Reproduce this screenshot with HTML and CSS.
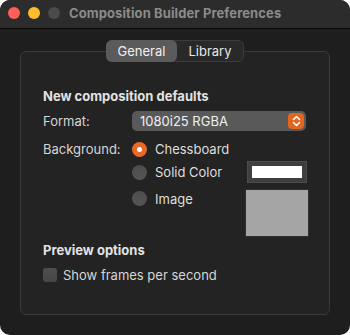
FILE: index.html
```html
<!DOCTYPE html>
<html lang="en">
<head>
  <meta charset="UTF-8" />
  <title>Composition Builder Preferences</title>
  <link rel="stylesheet" href="styles.css">
</head>
<body>

<div class="window">
  <div class="titlebar">
    <span class="light red"></span>
    <span class="light yellow"></span>
    <span class="light gray"></span>
    <span class="title">Composition Builder Preferences</span>
  </div>

  <div class="content">
    <div class="tabs">
      <div class="tab active">General</div>
      <div class="tab">Library</div>
    </div>

    <div class="box">
      <h2>New composition defaults</h2>

      <div class="row format-row">
        <span class="label">Format:</span>
        <div class="popup">
          <span>1080i25 RGBA</span>
          <span class="stepper">
            <svg width="9" height="12" viewBox="0 0 9 12">
              <path d="M1.5 4.5 L4.5 1.5 L7.5 4.5 M1.5 7.5 L4.5 10.5 L7.5 7.5" fill="none" stroke="#fff" stroke-width="1.6" stroke-linecap="round" stroke-linejoin="round"/>
            </svg>
          </span>
        </div>
      </div>

      <div class="bg-group">
        <span class="label">Background:</span>
        <div class="options">
          <div class="option opt-1">
            <span class="radio on"></span>
            <span>Chessboard</span>
          </div>
          <div class="option opt-2">
            <span class="radio"></span>
            <span class="opt-text">Solid Color</span>
            <span class="color-well"><span class="swatch"></span></span>
          </div>
          <div class="option opt-3">
            <span class="radio"></span>
            <span class="opt-text">Image</span>
            <span class="image-well"></span>
          </div>
        </div>
      </div>

      <h2 class="preview">Preview options</h2>
      <div class="check-row">
        <span class="checkbox"></span>
        <span>Show frames per second</span>
      </div>
    </div>
  </div>
</div>

</body>
</html>
```

FILE: styles.css
```css
* {
  box-sizing: border-box;
  margin: 0;
  padding: 0;
}
body {
  font-family: Inter, "Noto Sans", sans-serif;
  background-color: #fff;
  font-size: 13px;
  color: #dedede;
}
.window {
  width: 350px;
  height: 335px;
  border-radius: 10px;
  overflow: hidden;
  background-color: #1e1e1e;
}
.titlebar {
  height: 29px;
  background-color: #2c2c2c;
  border-bottom: 1px solid #080808;
  display: flex;
  align-items: center;
  padding-left: 8px;
  padding-bottom: 2px;
}
.light {
  width: 12px;
  height: 12px;
  border-radius: 50%;
  margin-right: 8px;
}
.red { background-color: #fe5f57; }
.yellow { background-color: #febc2e; }
.gray { background-color: #4b4b4b; }
.title {
  margin-left: 1px;
  font-weight: 700;
  color: #8b8b8b;
  font-size: 13px;
  letter-spacing: 0.1px;
}
.content {
  padding: 11px 20px 0;
}
.tabs {
  position: relative;
  z-index: 1;
  width: 138px;
  height: 22px;
  margin: 0 auto;
  display: flex;
  background-color: #292929;
  border: 1px solid #3c3c3c;
  border-radius: 6px;
}
.tab {
  display: flex;
  align-items: center;
  justify-content: center;
  width: 66px;
  color: #e6e6e6;
}
.tab.active {
  width: 71px;
  margin: -1px 0 -1px -1px;
  background-color: #5b5b5b;
  border-radius: 6px;
  color: #f0f0f0;
}
.box {
  margin-top: -11px;
  height: 264px;
  background-color: #232323;
  border: 1px solid #3a3a3a;
  border-radius: 6px;
  padding: 36px 20px 0 22px;
}
h2 {
  font-size: 13px;
  font-weight: 700;
  line-height: 16px;
  color: #e2e2e2;
}
.row {
  display: flex;
  align-items: center;
}
.label {
  width: 89px;
  color: #d6d6d6;
}
.format-row {
  margin-top: 7px;
  height: 20px;
}
.popup {
  width: 174px;
  height: 20px;
  background-color: #595959;
  border-radius: 5px;
  display: flex;
  align-items: center;
  justify-content: space-between;
  padding: 0 2px 0 8px;
  color: #f0f0f0;
}
.stepper {
  width: 16px;
  height: 16px;
  border-radius: 4px;
  background-color: #e2661f;
  display: flex;
  align-items: center;
  justify-content: center;
}
.bg-group {
  display: flex;
  margin-top: 7px;
}
.bg-group .label {
  line-height: 22px;
}
.options {
  flex: 1;
}
.option {
  display: flex;
  align-items: center;
  height: 22px;
}
.opt-2 {
  margin-top: 1px;
}
.opt-3 {
  margin-top: 6px;
  height: 48px;
  align-items: flex-start;
}
.opt-3 .radio {
  margin-top: 2px;
}
.opt-3 .opt-text {
  margin-top: 1px;
  line-height: 18px;
}
.radio {
  width: 15px;
  height: 15px;
  border-radius: 50%;
  background: linear-gradient(#4d4d4d, #555);
  margin-right: 8px;
  position: relative;
}
.radio.on {
  background: #e8692a;
}
.radio.on::after {
  content: "";
  position: absolute;
  left: 5px;
  top: 5px;
  width: 5px;
  height: 5px;
  border-radius: 50%;
  background-color: #fff;
}
.opt-text {
  flex: 1;
}
.color-well {
  width: 60px;
  height: 22px;
  margin-right: 2px;
  background-color: #3f3f3f;
  border: 1px solid #4b4b4b;
  padding: 4px;
}
.swatch {
  display: block;
  height: 12px;
  background-color: #fff;
}
.image-well {
  width: 64px;
  height: 48px;
  background-color: #a5a5a5;
  border: 1px solid #303030;
}
.preview {
  margin-top: 5px;
}
.check-row {
  display: flex;
  align-items: center;
  margin-top: 9px;
  color: #d6d6d6;
}
.checkbox {
  width: 14px;
  height: 14px;
  border-radius: 3px;
  background: linear-gradient(#4f4f4f, #474747);
  margin-right: 6px;
}
```
